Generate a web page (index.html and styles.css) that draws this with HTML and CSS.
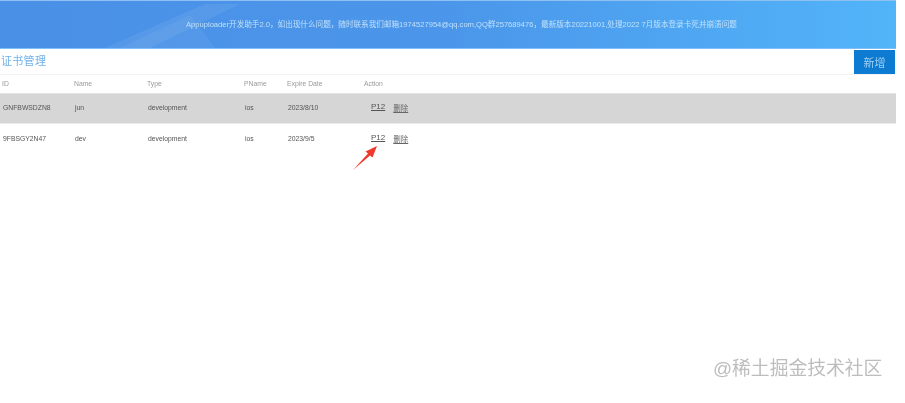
FILE: index.html
```html
<!DOCTYPE html>
<html lang="zh-CN">
<head>
<meta charset="utf-8">
<title>证书管理</title>
<link rel="stylesheet" href="styles.css">
</head>
<body>
<div class="page">
  <header class="banner">
    <svg class="banner-art" viewBox="0 0 300 49" preserveAspectRatio="none" aria-hidden="true">
      <polygon points="105,47 205,3 240,3 150,47" fill="#ffffff" fill-opacity="0.07"/>
      <polygon points="120,47 190,14 215,47" fill="#ffffff" fill-opacity="0.05"/>
    </svg>
    <p class="notice">Appuploader开发助手2.0，如出现什么问题，随时联系我们邮箱1974527954@qq.com,QQ群257689476，最新版本20221001,处理2022 7月版本登录卡死并崩溃问题</p>
  </header>
  <div class="titlebar">
    <h1 class="title">证书管理</h1>
    <button class="add" type="button">新增</button>
  </div>
  <div class="row head">
    <span>ID</span><span>Name</span><span>Type</span><span>PName</span><span>Expire Date</span><span>Action</span>
  </div>
  <div class="row data shaded">
    <span>GNFBWSDZN8</span><span>jun</span><span>development</span><span>ios</span><span>2023/8/10</span>
    <span class="actions"><a href="#">P12</a><a class="del" href="#">删除</a></span>
  </div>
  <div class="row data">
    <span>9FBSGY2N47</span><span>dev</span><span>development</span><span>ios</span><span>2023/9/5</span>
    <span class="actions"><a href="#">P12</a><a class="del" href="#">删除</a></span>
  </div>
</div>
<svg class="arrow" width="30" height="30" viewBox="0 0 30 30" aria-hidden="true">
  <polygon points="1,27 16,10.5 13.5,8.5 25,3 20.5,14.5 18,12.5" fill="#ee3a2c"/>
</svg>
<div class="watermark">@稀土掘金技术社区</div>
</body>
</html>
```
FILE: styles.css
```css
html, body {
  margin: 0;
  padding: 0;
  background: #fff;
}
body {
  width: 905px;
  height: 403px;
  overflow: hidden;
  position: relative;
  font-family: "Liberation Sans", "Noto Sans CJK SC", sans-serif;
}
.page {
  width: 896px;
}
.banner {
  position: relative;
  height: 49px;
  box-sizing: border-box;
  border-top: 1px solid #8fc0f2;
  border-bottom: 1px solid #7fc0f8;
  background: linear-gradient(90deg, #4a90e6 0%, #4b96ea 50%, #52b4f9 100%);
  display: flex;
  align-items: center;
  overflow: hidden;
}
.banner-art {
  position: absolute;
  left: 0;
  top: 0;
  width: 300px;
  height: 49px;
}
.notice {
  position: relative;
  margin: 0 0 0 186px;
  font-size: 7.6px;
  line-height: 12px;
  color: #bfe0fb;
  white-space: nowrap;
  filter: blur(0.5px);
}
.titlebar {
  height: 24px;
  padding-top: 1px;
  display: flex;
  align-items: stretch;
  justify-content: space-between;
  border-bottom: 1px solid #f3f3f3;
}
.title {
  margin: 0;
  padding-left: 1px;
  font-size: 11px;
  line-height: 23px;
  font-weight: 400;
  letter-spacing: 0.3px;
  color: #6fb2ea;
  filter: blur(0.5px);
}
.add {
  width: 41px;
  margin: 0 1px 0 0;
  padding: 0;
  border: 0;
  background: #0c7bd1;
  color: #9fd0f2;
  font-family: inherit;
  font-size: 11px;
  filter: blur(0.4px);
}
.row {
  display: grid;
  grid-template-columns: 72px 73px 97px 43px 77px 1fr;
  align-items: center;
  font-size: 6.8px;
  padding-left: 2px;
}
.row span {
  filter: blur(0.4px);
}
.head {
  height: 18px;
  padding-bottom: 1px;
  box-sizing: border-box;
  color: #9a9a9a;
}
.data {
  height: 31px;
  box-sizing: border-box;
  padding-bottom: 2px;
  color: #555;
}
.shaded {
  height: 31px;
  background: #d6d6d6;
  border-top: 1px solid #e4e4e4;
  border-bottom: 1px solid #e9e9e9;
}
.data span:not(.actions) {
  padding-left: 1px;
}
.actions {
  display: flex;
  gap: 8px;
  padding-left: 7px;
}
.actions a {
  color: #555;
  font-size: 8px;
  text-decoration: underline;
}
.actions .del {
  font-size: 7.5px;
  color: #666;
}
.arrow {
  position: absolute;
  left: 352px;
  top: 143px;
  filter: blur(0.3px);
}
.watermark {
  position: absolute;
  left: 713px;
  top: 357px;
  font-size: 18.8px;
  line-height: 23px;
  color: #bdbdbd;
  white-space: nowrap;
  filter: blur(0.5px);
}
```
